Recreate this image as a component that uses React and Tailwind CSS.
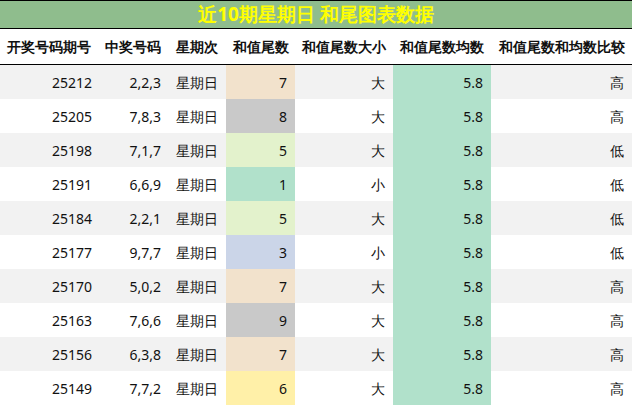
const rows = [
  ['25212', '2,2,3', 7, '大', '高'],
  ['25205', '7,8,3', 8, '大', '高'],
  ['25198', '7,1,7', 5, '大', '低'],
  ['25191', '6,6,9', 1, '小', '低'],
  ['25184', '2,2,1', 5, '大', '低'],
  ['25177', '9,7,7', 3, '小', '低'],
  ['25170', '5,0,2', 7, '大', '高'],
  ['25163', '7,6,6', 9, '大', '高'],
  ['25156', '6,3,8', 7, '大', '高'],
  ['25149', '7,7,2', 6, '大', '高'],
];

const tailBg = {
  7: 'bg-[#f2e2cc]',
  8: 'bg-[#c9c9c9]',
  9: 'bg-[#c9c9c9]',
  5: 'bg-[#e3f2cc]',
  1: 'bg-[#b1e1cb]',
  3: 'bg-[#cbd5e8]',
  6: 'bg-[#fff0a8]',
};

const cols = 'grid grid-cols-[98px_69px_59px_69px_98px_98px_141px]';

export default function App() {
  return (
    <div className="w-[632px] h-[406px] bg-white text-[14px] text-[#111] font-['Liberation_Sans','Noto_Sans_CJK_SC',sans-serif]">
      <div className="h-[29px] border-y border-black bg-[#8fbd8d] flex items-center justify-center text-[19px] font-bold text-[#ffff00] font-['Liberation_Serif','Noto_Sans_CJK_SC',serif]">
        近10期星期日 和尾图表数据
      </div>
      <div className={`${cols} h-[36px] border-b border-black font-bold text-[14px] items-center`}>
        <div className="text-center">开奖号码期号</div>
        <div className="text-center">中奖号码</div>
        <div className="text-center">星期次</div>
        <div className="text-center">和值尾数</div>
        <div className="text-center">和值尾数大小</div>
        <div className="text-center">和值尾数均数</div>
        <div className="text-center">和值尾数和均数比较</div>
      </div>
      {rows.map((r, i) => (
        <div key={r[0]} className={`${cols} h-[34px] ${i % 2 === 0 ? 'bg-[#f2f2f2]' : 'bg-white'}`}>
          <div className="flex items-center justify-end pr-[6px]">{r[0]}</div>
          <div className="flex items-center justify-end pr-[6px]">{r[1]}</div>
          <div className="flex items-center justify-center">星期日</div>
          <div className={`flex items-center justify-end pr-[8px] ${tailBg[r[2]]}`}>{r[2]}</div>
          <div className="flex items-center justify-end pr-[8px]">{r[3]}</div>
          <div className="flex items-center justify-end pr-[8px] bg-[#b1e1cb]">5.8</div>
          <div className="flex items-center justify-end pr-[8px]">{r[4]}</div>
        </div>
      ))}
    </div>
  );
}
